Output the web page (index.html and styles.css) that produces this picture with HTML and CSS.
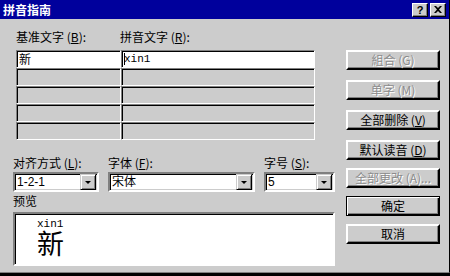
FILE: index.html
```html
<!DOCTYPE html>
<html lang="zh-CN">
<head>
    <meta charset="UTF-8">
    <title>拼音指南</title>
    <link rel="stylesheet" href="styles.css">
</head>
<body>
    <div class="dialog">
        <div class="titlebar">
            <span class="title">拼音指南</span>
            <div class="title-btns">
                <span class="tbtn help">?</span>
                <span class="tbtn close">
                    <svg width="8" height="7" viewBox="0 0 8 7">
                        <path d="M0 0h2l2 2 2-2h2L5 3.5 8 7H6L4 5 2 7H0l3-3.5z" fill="#000"/>
                    </svg>
                </span>
            </div>
        </div>

        <div class="content">
            <div class="left">
                <div class="pairs">
                    <div class="label-row">
                        <span class="label col-base">基准文字 (<u>B</u>):</span>
                        <span class="label">拼音文字 (<u>R</u>):</span>
                    </div>
                    <div class="grid">
                        <div class="cell active">新</div>
                        <div class="cell active mono"><span class="caret"></span>xin1</div>
                        <div class="cell"></div><div class="cell"></div>
                        <div class="cell"></div><div class="cell"></div>
                        <div class="cell"></div><div class="cell"></div>
                        <div class="cell"></div><div class="cell"></div>
                    </div>
                </div>

                <div class="options">
                    <div class="field f-align">
                        <span class="label">对齐方式 (<u>L</u>):</span>
                        <div class="combo"><span class="combo-value">1-2-1</span><span class="drop"></span></div>
                    </div>
                    <div class="field f-font">
                        <span class="label">字体 (<u>F</u>):</span>
                        <div class="combo"><span class="combo-value">宋体</span><span class="drop"></span></div>
                    </div>
                    <div class="field f-size">
                        <span class="label">字号 (<u>S</u>):</span>
                        <div class="combo"><span class="combo-value">5</span><span class="drop"></span></div>
                    </div>
                </div>

                <div class="label preview-label">预览</div>
                <div class="preview">
                    <div class="ruby-text">xin1</div>
                    <div class="base-text">新</div>
                </div>
            </div>

            <div class="buttons">
                <div class="btn disabled">組合 (G)</div>
                <div class="btn disabled">单字 (M)</div>
                <div class="btn">全部删除 (<u>V</u>)</div>
                <div class="btn">默认读音 (<u>D</u>)</div>
                <div class="btn disabled near">全部更改 (A)...</div>
                <div class="btn default near">确定</div>
                <div class="btn near">取消</div>
            </div>
        </div>
    </div>
</body>
</html>
```

FILE: styles.css
```css
html, body {
    margin: 0;
    padding: 0;
    background: #000;
}

body {
    font-family: "Noto Sans CJK SC", "Liberation Sans", sans-serif;
    font-size: 12px;
    color: #000;
}

.dialog {
    width: 449px;
    height: 272px;
    background: #cccccc;
    border-right: 1px solid #000;
    border-bottom: 1px solid #808080;
    display: flex;
    flex-direction: column;
    overflow: hidden;
}

/* title bar */
.titlebar {
    height: 19px;
    background: #00009c;
    display: flex;
    align-items: center;
    justify-content: space-between;
    padding: 0 3px 0 3px;
}

.title {
    color: #fff;
    font-weight: bold;
    font-size: 12px;
    line-height: 14px;
}

.title-btns {
    display: flex;
    gap: 2px;
}

.tbtn {
    width: 14px;
    height: 12px;
    background: #cccccc;
    border: 1px solid;
    border-color: #fff #000 #000 #fff;
    box-shadow: inset -1px -1px #808080;
    display: flex;
    align-items: center;
    justify-content: center;
}

.help {
    font-family: "Liberation Sans", sans-serif;
    font-weight: bold;
    font-size: 11px;
    line-height: 12px;
}

/* main area */
.content {
    display: flex;
    padding-left: 13px;
}

.left {
    width: 322px;
}

.label {
    line-height: 14px;
    white-space: nowrap;
}

.pairs {
    padding-left: 3px;
}

.label-row {
    display: flex;
    margin-top: 11px;
}

.col-base {
    width: 104px;
}

.grid {
    margin-top: 6px;
    display: grid;
    grid-template-columns: 105px 194px;
    grid-auto-rows: 18px;
}

.cell {
    border: 1px solid;
    border-color: #808080 #fff #fff #808080;
    box-shadow: inset 1px 1px #000;
    padding: 0 0 0 2px;
    line-height: 16px;
    display: flex;
    align-items: center;
}

.cell.active {
    background: #fff;
}

.mono {
    font-family: "Liberation Mono", monospace;
    font-size: 11px;
}

.caret {
    width: 1px;
    height: 12px;
    background: #000;
    margin-right: -1px;
}

/* alignment / font / size */
.options {
    display: flex;
    gap: 9px;
    margin-top: 16px;
}

.field {
    display: flex;
    flex-direction: column;
    gap: 2px;
}

.f-align { width: 86px; }
.f-font { width: 147px; }
.f-size { width: 71px; }

.combo {
    height: 16px;
    background: #fff;
    border: 2px solid;
    border-color: #808080 #fff #fff #808080;
    box-shadow: inset 1px 1px #000, inset -1px -1px #ccc;
    display: flex;
    align-items: center;
    padding-left: 2px;
}

.combo-value {
    flex: 1;
    font-size: 12px;
    line-height: 14px;
    font-family: "Liberation Sans", "Noto Sans CJK SC", sans-serif;
}

.drop {
    width: 14px;
    height: 14px;
    margin-right: 1px;
    background: #cccccc;
    border: 1px solid;
    border-color: #ccc #000 #000 #ccc;
    box-shadow: inset 1px 1px #fff, inset -1px -1px #808080;
    position: relative;
}

.drop::after {
    content: "";
    position: absolute;
    left: 4px;
    top: 6px;
    border-left: 3px solid transparent;
    border-right: 3px solid transparent;
    border-top: 3px solid #000;
}

.preview-label {
    margin-top: 2px;
}

.preview {
    margin-top: 4px;
    height: 50px;
    background: #fff;
    border: 2px solid;
    border-color: #808080 #fff #fff #808080;
    box-shadow: inset 1px 1px #000;
    padding-left: 22px;
}

.ruby-text {
    font-family: "Liberation Mono", monospace;
    font-size: 11px;
    line-height: 9px;
    margin-top: 6px;
}

.base-text {
    font-size: 27px;
    line-height: 27px;
}

/* command buttons */
.buttons {
    margin-left: 11px;
    width: 94px;
    display: flex;
    flex-direction: column;
    padding-top: 31px;
}

.btn {
    height: 16px;
    line-height: 16px;
    text-align: center;
    border: 2px solid;
    border-color: #fff #000 #000 #fff;
    box-shadow: inset -1px -1px #808080;
    white-space: nowrap;
}

.btn + .btn {
    margin-top: 10px;
}

.btn.near {
    margin-top: 8px;
}

.btn.disabled {
    color: #8c8c8c;
    text-shadow: 1px 1px #fff;
}

.btn.default {
    border: 1px solid #000;
    box-shadow: inset 1px 1px #fff, inset -1px -1px #000, inset -2px -2px #808080;
    height: 18px;
    line-height: 18px;
}
```
